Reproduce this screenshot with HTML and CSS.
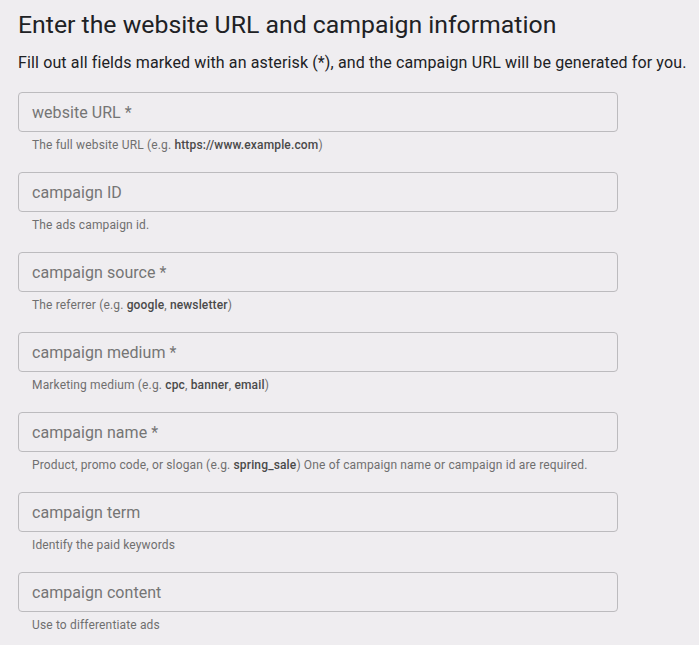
FILE: index.html
```html
<!DOCTYPE html>
<html>
<head>
<meta charset="utf-8">
<link rel="stylesheet" href="styles.css">
</head>
<body>
<div class="page">
  <h1 class="title">Enter the website URL and campaign information</h1>
  <p class="intro">Fill out all fields marked with an asterisk (*), and the campaign URL will be generated for you.</p>
  <div class="fields">
    <div class="field">
      <div class="box"><span class="label">website URL *</span></div>
      <div class="help">The full website URL (e.g. <b>https://www.example.com</b>)</div>
    </div>
    <div class="field">
      <div class="box"><span class="label">campaign ID</span></div>
      <div class="help">The ads campaign id.</div>
    </div>
    <div class="field">
      <div class="box"><span class="label">campaign source *</span></div>
      <div class="help">The referrer (e.g. <b>google</b>, <b>newsletter</b>)</div>
    </div>
    <div class="field">
      <div class="box"><span class="label">campaign medium *</span></div>
      <div class="help">Marketing medium (e.g. <b>cpc</b>, <b>banner</b>, <b>email</b>)</div>
    </div>
    <div class="field">
      <div class="box"><span class="label">campaign name *</span></div>
      <div class="help">Product, promo code, or slogan (e.g. <b>spring_sale</b>) One of campaign name or campaign id are required.</div>
    </div>
    <div class="field">
      <div class="box"><span class="label">campaign term</span></div>
      <div class="help">Identify the paid keywords</div>
    </div>
    <div class="field">
      <div class="box"><span class="label">campaign content</span></div>
      <div class="help">Use to differentiate ads</div>
    </div>
  </div>
</div>
</body>
</html>
```
FILE: styles.css
```css
html, body {
  margin: 0;
  padding: 0;
  background: #efedf0;
}
body {
  font-family: Roboto, "Liberation Sans", sans-serif;
  color: #202124;
}
.page {
  padding: 10px 0 0 18px;
}
.title {
  margin: 0;
  font-size: 24.8px;
  font-weight: 400;
  line-height: 30px;
  color: #202124;
  white-space: nowrap;
}
.intro {
  margin: 13px 0 0 0;
  font-size: 16px;
  line-height: 20px;
  letter-spacing: 0.13px;
  color: #202124;
  white-space: nowrap;
}
.fields {
  margin-top: 19px;
  display: flex;
  flex-direction: column;
  gap: 19px;
}
.field {
  display: flex;
  flex-direction: column;
}
.box {
  width: 600px;
  height: 40px;
  box-sizing: border-box;
  border: 1px solid #bcbbbe;
  border-radius: 4px;
  padding: 0 13px;
  display: flex;
  align-items: center;
}
.label {
  font-size: 16px;
  letter-spacing: 0.05px;
  color: #757575;
}
.help {
  margin-top: 5px;
  padding-left: 14px;
  font-size: 12px;
  line-height: 16px;
  letter-spacing: 0.15px;
  color: #6f6f6f;
  white-space: nowrap;
}
.help b {
  font-weight: 500;
  color: #4a4a4a;
}
```
